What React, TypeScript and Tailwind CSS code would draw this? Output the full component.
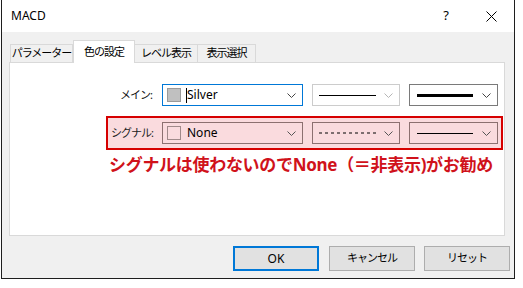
import React from "react";

const jp = { fontFamily: '"Noto Sans", "Noto Sans CJK JP", sans-serif' };

function Chevron({ color = "#555" }: { color?: string }) {
  return (
    <svg width="9" height="5" viewBox="0 0 9 5" className="shrink-0">
      <polyline points="0.5,0.5 4.5,4.5 8.5,0.5" fill="none" stroke={color} strokeWidth="1" />
    </svg>
  );
}

function Combo({
  width,
  border,
  bg,
  chevron,
  children,
}: {
  width: string;
  border: string;
  bg: string;
  chevron?: string;
  children: React.ReactNode;
}) {
  return (
    <div className={`flex items-center h-[22px] border ${width} ${border} ${bg} pl-[4px] pr-[6px]`}>
      <div className="flex-1 flex items-center min-w-0">{children}</div>
      <Chevron color={chevron} />
    </div>
  );
}

function Tab({ label, active, width }: { label: string; active?: boolean; width: string }) {
  return (
    <div
      className={
        active
          ? `relative z-10 -mb-px h-[23px] ${width} bg-white border border-b-0 border-[#d9d9d9] flex items-center justify-center text-[11px] tracking-[-1px] text-[#000]`
          : `h-[18px] ${width} bg-[#f0f0f0] border border-b-0 border-[#d9d9d9] -ml-px first:ml-0 flex items-center justify-center text-[11px] tracking-[-1px] text-[#000]`
      }
    >
      <span className="whitespace-nowrap">{label}</span>
    </div>
  );
}

export default function App() {
  return (
    <div className="w-[523px] h-[288px] bg-white" style={jp}>
      <div className="ml-px w-[514px] h-[279px] border-l border-r border-b border-[#1e1e1e] flex flex-col">
        {/* title bar */}
        <div className="h-[32px] bg-white flex items-center pl-[9px] pr-[17px]">
          <span className="text-[12px] text-black" style={{ fontFamily: '"Noto Sans", sans-serif' }}>MACD</span>
          <span className="ml-auto text-[13px] text-black mr-[37px]">?</span>
          <svg width="11" height="11" viewBox="0 0 11 11">
            <path d="M0.5 0.5 L10.5 10.5 M10.5 0.5 L0.5 10.5" stroke="#000" strokeWidth="1" />
          </svg>
        </div>

        {/* body */}
        <div className="flex-1 bg-[#f0f0f0] pt-[8px] pl-[7px]">
          <div className="flex items-end pl-px h-[22px]">
            <Tab label="パラメーター" width="w-[63px]" />
            <Tab label="色の設定" width="w-[62px]" active />
            <Tab label="レベル表示" width="w-[64px]" />
            <Tab label="表示選択" width="w-[59px]" />
          </div>

          <div className="w-[496px] h-[174px] bg-white border border-[#d9d9d9] pt-[19px] pl-[96px]">
            {/* main row */}
            <div className="flex items-center w-[397px] border-2 border-transparent">
              <div className="w-[46px] text-right text-[11px] tracking-[-1px] pr-[2px] text-[#111]">メイン:</div>
              <div className="ml-[8px] flex gap-[9px]">
                <Combo width="w-[141px]" border="border-[#0078d7]" bg="bg-white" chevron="#444">
                  <div className="w-[14px] h-[14px] bg-[#c0c0c0] border border-[#9a9a9a] mr-[5px]" />
                  <span className="w-px h-[15px] bg-black" />
                  <span className="text-[12px] text-black">Silver</span>
                </Combo>
                <Combo width="w-[88px]" border="border-[#cccccc]" bg="bg-white" chevron="#b5b5b5">
                  <div className="ml-[2px] w-[57px] h-px bg-black" />
                </Combo>
                <Combo width="w-[89px]" border="border-[#7a7a7a]" bg="bg-white" chevron="#444">
                  <div className="ml-[3px] w-[56px] h-[3px] bg-black" />
                </Combo>
              </div>
            </div>

            {/* signal row */}
            <div className="mt-[8px] flex items-center w-[397px] h-[34px] border-2 border-[#d60000] bg-[#fadbde]">
              <div className="w-[46px] pl-[3px] text-[11px] tracking-[-1px] text-[#222] whitespace-nowrap">シグナル:</div>
              <div className="ml-[8px] flex gap-[9px]">
                <Combo width="w-[141px]" border="border-[#8c7070]" bg="bg-[#fadbde]" chevron="#555">
                  <div className="w-[14px] h-[14px] border border-[#a08a8a] mr-[6px]" />
                  <span className="text-[12px] text-black">None</span>
                </Combo>
                <Combo width="w-[88px]" border="border-[#8c7070]" bg="bg-[#fadbde]" chevron="#555">
                  <svg width="58" height="2" viewBox="0 0 58 2" className="ml-[2px]">
                    <line x1="0" y1="1" x2="58" y2="1" stroke="#000" strokeWidth="1" strokeDasharray="3,3" />
                  </svg>
                </Combo>
                <Combo width="w-[89px]" border="border-[#8c7070]" bg="bg-[#fadbde]" chevron="#555">
                  <div className="ml-[3px] w-[56px] h-px bg-black" />
                </Combo>
              </div>
            </div>

            <div className="mt-[5px] pl-[3px] text-[17px] leading-[20px] font-bold text-[#d0121b] whitespace-nowrap tracking-[-0.3px]">
              シグナルは使わないのでNone（＝非表示)がお勧め
            </div>
          </div>

          {/* buttons */}
          <div className="flex pl-[224px] pt-[10px] gap-[9px]">
            <div className="w-[86px] h-[25px] border-2 border-[#0078d7] bg-[#e1e1e1] flex items-center justify-center text-[12px] text-black">OK</div>
            <div className="ml-px w-[86px] h-[25px] border border-[#adadad] bg-[#e1e1e1] flex items-center justify-center text-[11px] tracking-[-1px] text-black">キャンセル</div>
            <div className="w-[86px] h-[25px] border border-[#adadad] bg-[#e1e1e1] flex items-center justify-center text-[11px] tracking-[-1px] text-black">リセット</div>
          </div>
        </div>
      </div>
    </div>
  );
}
